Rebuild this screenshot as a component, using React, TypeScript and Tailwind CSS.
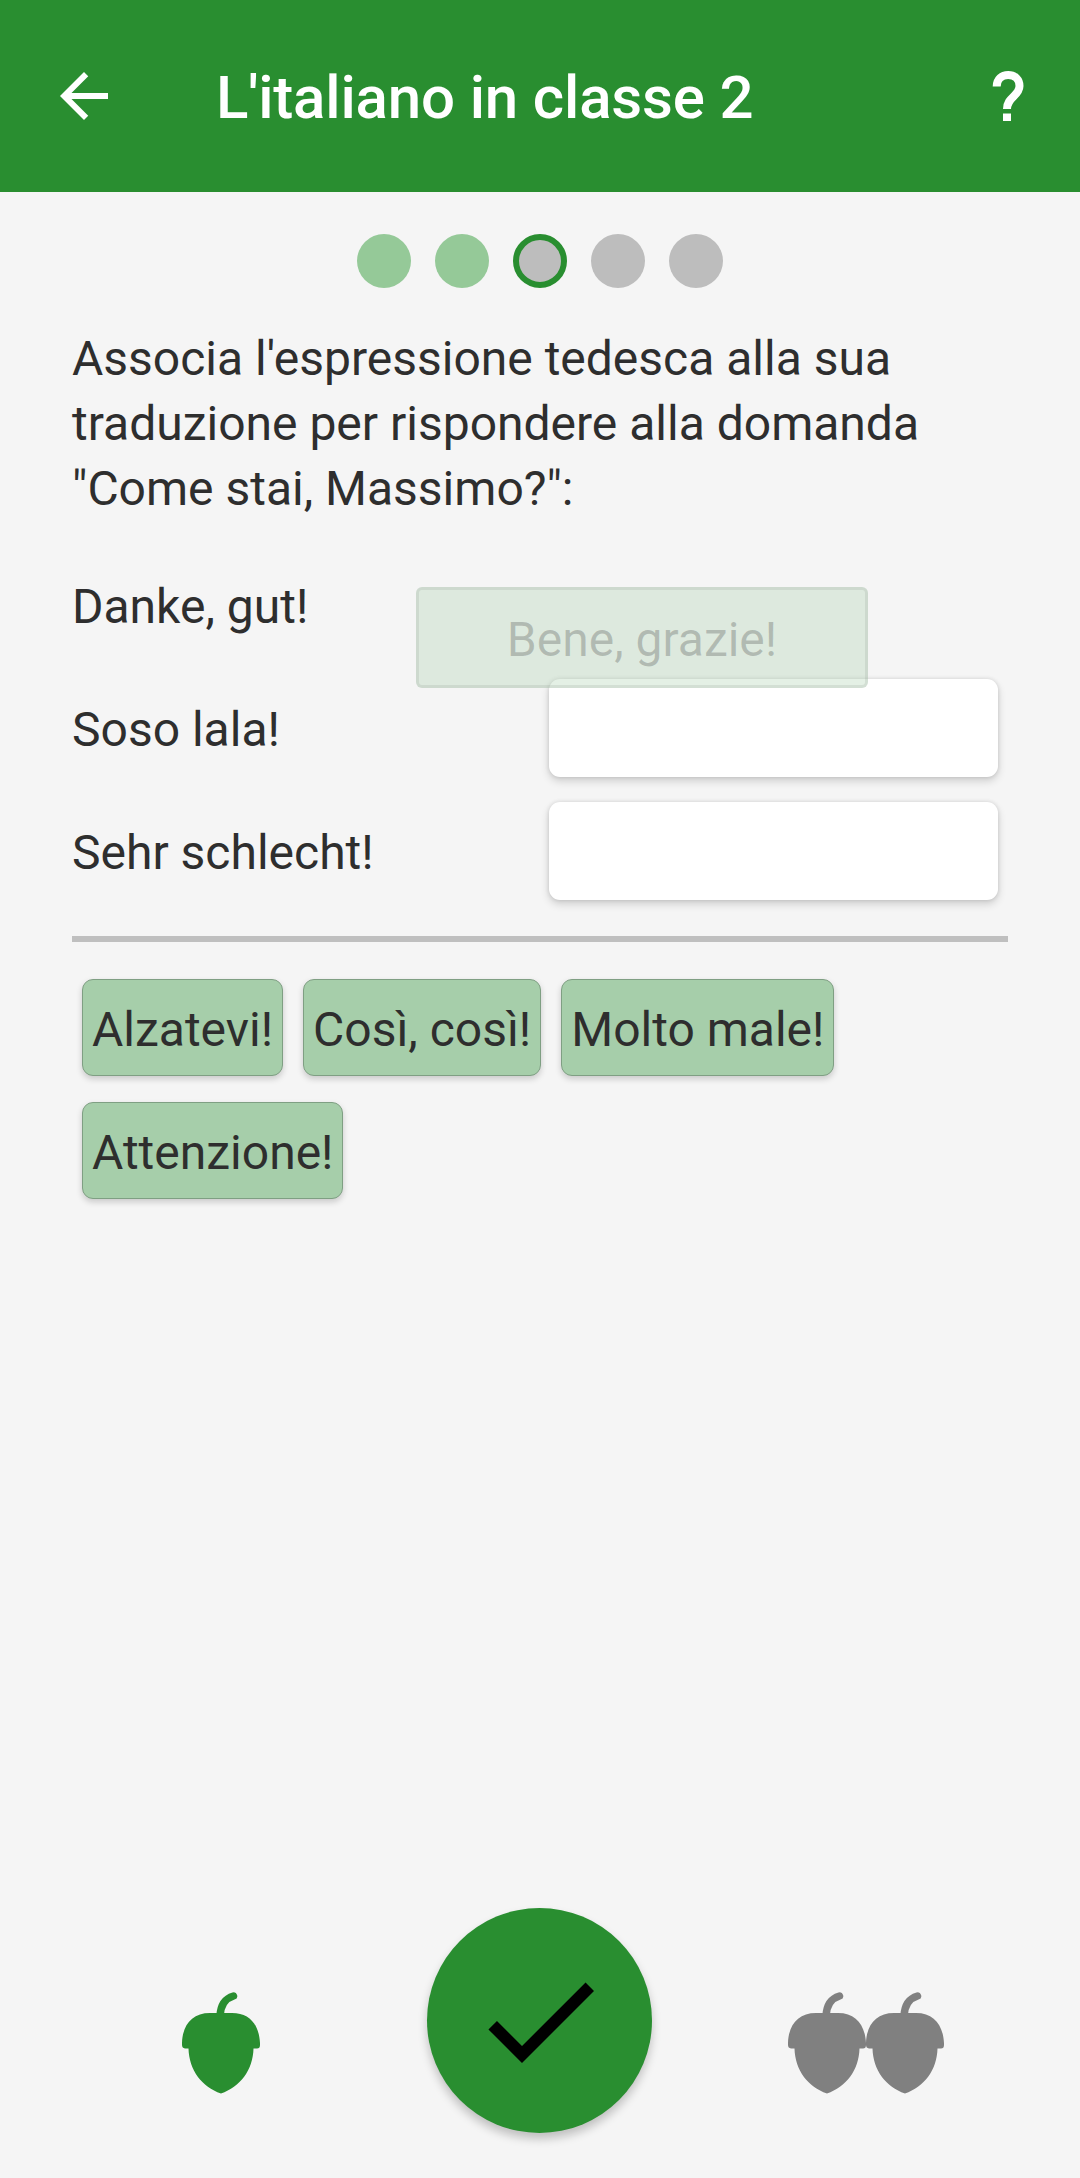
const prompts = ["Danke, gut!", "Soso lala!", "Sehr schlecht!"];
const answers = ["Alzatevi!", "Così, così!", "Molto male!", "Attenzione!"];

function Acorn() {
  return (
    <svg viewBox="0 0 78 102" className="h-[102px] w-[78px] shrink-0">
      <path
        d="M38 24C38.500 14 43 6.500 51.500 4"
        fill="none"
        stroke="currentColor"
        strokeWidth="7.500"
        strokeLinecap="round"
      />
      <path
        d="M28 21H50C68 21 77 33 78 51V53Q78 56.500 75 56.500H71.500C71 78 58 95 39 101.500C20 95 7 78 6.500 56.500H3Q0 56 0 53V51C0.500 33 10 21 28 21Z"
        fill="currentColor"
      />
    </svg>
  );
}

function Header() {
  return (
    <header className="flex h-[192px] items-center bg-[#298e30] px-[48px] text-white">
      <svg viewBox="0 0 24 24" className="size-[72px]" fill="currentColor">
        <path d="M20 11H7.830l5.590-5.590L12 4l-8 8 8 8 1.410-1.410L7.830 13H20v-2z" />
      </svg>
      <h1 className="ml-[96px] pt-1 text-[60px] leading-[72px] font-medium tracking-[-0.15px] whitespace-nowrap">
        L'italiano in classe 2
      </h1>
      <svg viewBox="0 0 48 72" className="ml-auto h-[72px] w-[48px]">
        <path
          d="M12.700 26.500C12.700 19 18 15 24.200 15C31 15 35.500 19.500 35.500 26C35.500 36 23 37 23 49"
          fill="none"
          stroke="currentColor"
          strokeWidth="8"
        />
        <path d="M19 53.500h8v7.500h-8z" fill="currentColor" />
      </svg>
    </header>
  );
}

export default function App() {
  return (
    <div className="flex h-[2178px] w-[1080px] flex-col overflow-hidden bg-[#f5f5f5] font-['Roboto',sans-serif] text-[48px] text-[#2e2e2e]">
      <Header />
      <div className="mt-[42px] flex justify-center gap-[24px]">
        <div className="size-[54px] rounded-full bg-[#95c998]" />
        <div className="size-[54px] rounded-full bg-[#95c998]" />
        <div className="size-[54px] rounded-full border-[6px] border-[#298e30] bg-[#bdbdbd]" />
        <div className="size-[54px] rounded-full bg-[#bdbdbd]" />
        <div className="size-[54px] rounded-full bg-[#bdbdbd]" />
      </div>
      <main className="flex flex-1 flex-col px-[72px]">
        <p className="mt-[38px] leading-[65px]">
          Associa l'espressione tedesca alla sua
          <br />
          traduzione per rispondere alla domanda
          <br />
          "Come stai, Massimo?":
        </p>
        <div className="relative mt-[21px]">
          {prompts.map((prompt, i) => (
            <div key={prompt} className="flex h-[123px] items-start justify-between pr-[10px]">
              <span className="mt-[32px] leading-[65px]">{prompt}</span>
              {i > 0 && (
                <div className="mt-[14px] h-[98px] w-[449px] rounded-[11px] bg-white shadow-[0_4px_8px_rgba(0,0,0,0.16),0_0_4px_rgba(0,0,0,0.12)]" />
              )}
            </div>
          ))}
          <div className="absolute top-[45px] left-[344px] flex h-[101px] w-[452px] items-center justify-center rounded-[6px] border-[3px] border-[#8c9c8f]/20 bg-[#a6ceaa]/30 pt-1 text-[#2e2e2e]/25">
            Bene, grazie!
          </div>
        </div>
        <div className="mt-[25px] h-[6px] bg-[#bfbfbf]" />
        <div className="mt-[37px] flex flex-wrap gap-x-[20px] gap-y-[26px] px-[10px]">
          {answers.map((answer) => (
            <button
              key={answer}
              className="h-[97px] rounded-[11px] border border-[#7f9f83] bg-[#a6ceaa] px-[9px] pt-[4px] leading-[65px] shadow-[0_3px_6px_rgba(0,0,0,0.18)]"
            >
              {answer}
            </button>
          ))}
        </div>
      </main>
      <footer className="grid h-[270px] grid-cols-[427px_225px_428px] items-start">
        <div className="flex pt-[84px] pl-[182px] text-[#298e30]">
          <Acorn />
        </div>
        <button className="flex size-[225px] items-center justify-center rounded-full bg-[#298e30] text-black shadow-[0_6px_10px_rgba(0,0,0,0.22)]">
          <svg viewBox="0 0 24 24" className="size-[144px]" fill="currentColor">
            <path d="M9 16.170L4.830 12l-1.420 1.410L9 19 21 7l-1.410-1.410z" />
          </svg>
        </button>
        <div className="flex justify-end pt-[84px] pr-[136px] text-[#808080]">
          <Acorn />
          <Acorn />
        </div>
      </footer>
    </div>
  );
}
